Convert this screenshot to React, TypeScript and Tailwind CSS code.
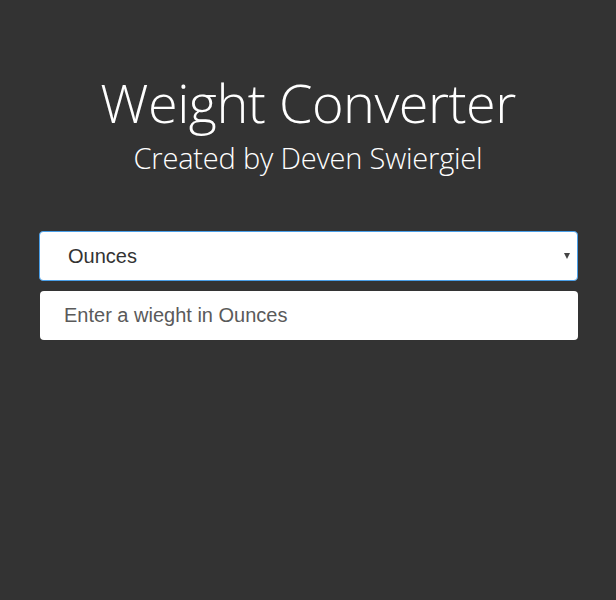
import { useState } from "react";

export default function App() {
  const [weight, setWeight] = useState("");

  return (
    <div className="min-h-[600px] w-full bg-[#333333]">
      <div className="px-[39px] pt-[64px]">
        {/* Header */}
        <div className="text-center text-white" style={{ fontFamily: '"Open Sans", sans-serif' }}>
          <h1 className="text-[54px] font-light leading-[76px] tracking-[-0.5px]">Weight Converter</h1>
          <p className="mt-[-2px] text-[29px] font-light leading-[40px] tracking-[-0.2px]">Created by Deven Swiergiel</p>
        </div>

        {/* Form */}
        <div className="mt-[53px] flex flex-col gap-[10px]" style={{ fontFamily: '"Liberation Sans", Arial, sans-serif' }}>
          <div className="relative flex h-[50px] w-[539px] items-center rounded-[4px] border border-[#4a9fe8] bg-white pl-[28px] text-[20px] text-[#333333]">
            Ounces
            <span className="absolute right-[7px] top-[21px] h-0 w-0 border-x-[3px] border-t-[6px] border-x-transparent border-t-[#444]"></span>
          </div>
          <input
            value={weight}
            onChange={(e) => setWeight(e.target.value)}
            placeholder="Enter a wieght in Ounces"
            className="ml-px h-[49px] w-[538px] rounded-[4px] bg-white pl-[24px] text-[20px] text-[#333] outline-none placeholder:text-[#5a5a5a]"
          />
        </div>
      </div>
    </div>
  );
}
